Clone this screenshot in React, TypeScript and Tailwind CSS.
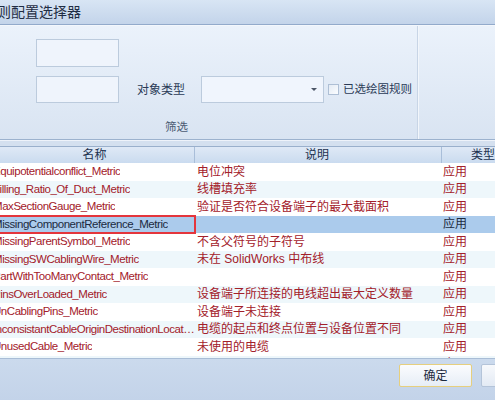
type Rule = {
  name: string;
  desc: string;
  kind: string;
};

const rules: Rule[] = [
  { name: 'Equipotentialconflict_Metric', desc: '电位冲突', kind: '应用' },
  { name: 'Filling_Ratio_Of_Duct_Metric', desc: '线槽填充率', kind: '应用' },
  { name: 'MaxSectionGauge_Metric', desc: '验证是否符合设备端子的最大截面积', kind: '应用' },
  { name: 'MissingComponentReference_Metric', desc: '', kind: '应用' },
  { name: 'MissingParentSymbol_Metric', desc: '不含父符号的子符号', kind: '应用' },
  { name: 'MissingSWCablingWire_Metric', desc: '未在 SolidWorks 中布线', kind: '应用' },
  { name: 'PartWithTooManyContact_Metric', desc: '', kind: '应用' },
  { name: 'PinsOverLoaded_Metric', desc: '设备端子所连接的电线超出最大定义数量', kind: '应用' },
  { name: 'UnCablingPins_Metric', desc: '设备端子未连接', kind: '应用' },
  { name: 'InconsistantCableOriginDestinationLocation_Metric', desc: '电缆的起点和终点位置与设备位置不同', kind: '应用' },
  { name: 'UnusedCable_Metric', desc: '未使用的电缆', kind: '应用' },
  { name: '', desc: '', kind: '应用' },
];

const SELECTED = 3;
const cjk = "font-['Liberation_Sans','Noto_Sans_CJK_SC',sans-serif]";

function RuleRow({ rule, index }: { rule: Rule; index: number }) {
  const selected = index === SELECTED;
  const bg = selected ? 'bg-[#abcbec]' : index % 2 === 1 ? 'bg-[#eef7fb]' : 'bg-white';
  const color = selected ? 'text-[#1b2a40]' : 'text-[#a3202a]';
  return (
    <div className={`flex h-[17.5px] shrink-0 items-center ${bg} ${color}`}>
      <div
        className={`relative flex h-full w-[204px] shrink-0 items-center pl-[2px] ${
          selected ? 'outline-2 -outline-offset-1 outline-[#e4353c]' : ''
        }`}
      >
        <span className="truncate text-[11.5px] tracking-[-0.45px]">{rule.name}</span>
      </div>
      <div className="w-[247px] shrink-0 truncate pl-[2px] text-[12px]">{rule.desc}</div>
      <div className="flex-1 pl-[1px] text-[12px]">{rule.kind}</div>
    </div>
  );
}

export default function App() {
  return (
    <div className={`flex h-[400px] w-[495px] flex-col overflow-hidden bg-[#dae5f2] ${cjk}`}>
      {/* title bar */}
      <div className="flex h-[25px] shrink-0 items-center overflow-hidden border-b border-[#92aacb] bg-gradient-to-b from-[#d8e5f4] to-[#c3d4ea]">
        <span className="ml-[-17px] shrink-0 whitespace-nowrap text-[14px] text-[#1f2d44]">规则配置选择器</span>
      </div>

      {/* filter panel */}
      <div className="flex h-[115px] shrink-0 border-t border-[#f3f7fc] border-b border-b-[#9cb2ce] bg-gradient-to-b from-[#ebf2fb] to-[#d9e4f2]">
        <div className="flex w-[417px] shrink-0 flex-col pl-[36px] pt-[13px] text-[12px] text-[#2a3a56]">
          <div className="h-[28px] w-[83px] border border-[#bccbdd] bg-[#eff4fc]" />
          <div className="mt-[9px] flex items-center">
            <div className="h-[27px] w-[83px] border border-[#bccbdd] bg-[#eff4fc]" />
            <span className="ml-[18px] w-[64px]">对象类型</span>
            <div className="flex h-[27px] w-[123px] items-center justify-end border border-[#bccbdd] bg-[#f0f5fd] pr-[6px]">
              <div className="h-0 w-0 border-x-[3px] border-t-[3px] border-x-transparent border-t-[#4b5566]" />
            </div>
            <div className="ml-[4px] h-[11px] w-[11px] border border-[#aebfd5] bg-gradient-to-br from-[#e4ebf4] to-[#fbfdff]" />
            <span className="ml-[4px] text-[11.5px]">已选绘图规则</span>
          </div>
          <div className="mt-[16px] pl-[129px] text-[11.5px] text-[#4a5b72]">筛选</div>
        </div>
        <div className="w-[2px] shrink-0 border-l border-[#c8d5e6] bg-[#f2f6fb]" />
        <div className="flex-1" />
      </div>

      {/* band */}
      <div className="h-[6px] shrink-0 border-t border-[#eef3fa] bg-[#d4e0ef]" />

      {/* table header */}
      <div className="ml-[-9px] flex h-[17px] shrink-0 border-t border-[#9ab0cc] bg-gradient-to-b from-[#dfe9f6] to-[#cadbef] text-[12px] text-[#1d3250]">
        <div className="flex w-[204px] shrink-0 items-center justify-center border-r border-[#a9bed9] pl-[4px]">名称</div>
        <div className="flex w-[247px] shrink-0 items-center justify-center border-r border-[#a9bed9] pr-[2px]">说明</div>
        <div className="flex flex-1 items-center pl-[29px]">类型</div>
      </div>

      {/* table body */}
      <div className="ml-[-9px] flex h-[195px] shrink-0 flex-col overflow-hidden bg-white">
        {rules.map((rule, i) => (
          <RuleRow key={i} rule={rule} index={i} />
        ))}
      </div>

      {/* footer */}
      <div className="flex flex-1 items-start border-t border-[#a9bdd6] bg-gradient-to-b from-[#cbdaed] to-[#c3d3e9] pt-[5px]">
        <div className="ml-[399px] flex h-[23px] w-[73px] shrink-0 items-center justify-center rounded-[2px] border border-[#e6cf7e] bg-gradient-to-b from-[#fbfcfe] to-[#e6edf6] text-[12px] text-[#1d2a3e]">
          确定
        </div>
        <div className="ml-[9px] h-[23px] w-[73px] shrink-0 rounded-[2px] border border-[#b4c4d9] bg-gradient-to-b from-[#f7f9fc] to-[#e3eaf4]" />
      </div>
    </div>
  );
}
